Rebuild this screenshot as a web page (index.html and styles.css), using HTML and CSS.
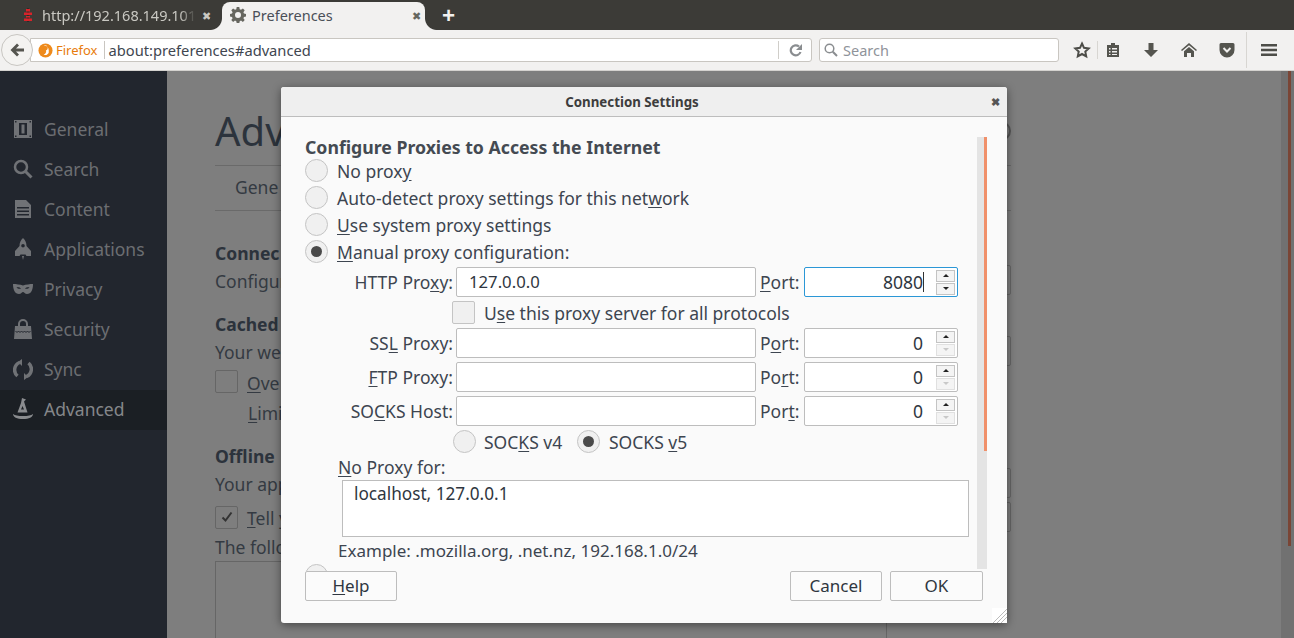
FILE: index.html
```html
<!DOCTYPE html>
<html>
  <head>
    <title>Preferences</title>
    <link rel="stylesheet" href="styles.css">
  </head>
  <body>
    <div class="tabbar">
      <div class="tab">
        <svg viewBox="0 0 10 14" width="10" height="14"><path fill="#2b2a28" d="M4 0h2v14H4z"/><path fill="#d8232a" d="M3 1h4v2.500H3zM1 4.500h8V7H1zM3 8h4v1.500H3zM1 10.500h8V13H1z"/></svg>
        <span class="tab-title">http://192.168.149.101</span>
        <span class="tab-x">&#10006;</span>
      </div>
      <div class="tab tab-on">
        <svg viewBox="0 0 16 16" width="16" height="16"><path fill="#66665f" fill-rule="evenodd" d="M6.700 0h2.600l.4 2.200 1.300.6 1.900-1.300 1.800 1.800-1.300 1.900.6 1.300 2 .4v2.600l-2 .4-.6 1.300 1.300 1.900-1.800 1.800-1.900-1.300-1.300.6-.4 2H6.700l-.4-2-1.300-.6-1.900 1.300-1.800-1.800 1.300-1.900-.6-1.300-2-.4V6.900l2-.4.6-1.300-1.300-1.900 1.800-1.800L5 2.800l1.300-.6zM8 5a3 3 0 1 0 0 6 3 3 0 0 0 0-6z"/></svg>
        <span class="tab-title">Preferences</span>
        <span class="tab-x">&#10006;</span>
      </div>
      <span class="tab-new">+</span>
    </div>

    <div class="toolbar">
      <button class="back">
        <svg viewBox="0 0 16 16" width="16" height="16"><path fill="#55554f" d="M8 1.500l2 2L7 6.500h8v3H7l3 3-2 2L1.500 8z"/></svg>
      </button>
      <div class="urlbar">
        <svg viewBox="0 0 16 16" width="15" height="15"><circle cx="8" cy="8" r="7.500" fill="#ee8a1b"/><path fill="#fff" d="M6 2.500a6 6 0 0 1 5.500 5.500A4 4 0 0 1 6 12.500 3.500 3.500 0 0 0 8.500 8 3 3 0 0 0 6 2.500z"/></svg>
        <span class="brand">Firefox</span>
        <span class="url">about:preferences#advanced</span>
        <i class="url-sep"></i>
        <svg class="reload" viewBox="0 0 14 14" width="14" height="14"><path fill="none" stroke="#8a8d90" stroke-width="2.200" d="M11.500 9a5 5 0 1 1-1.500-5.500"/><path fill="#8a8d90" d="M13 1v6H7z"/></svg>
      </div>
      <div class="searchbar">
        <svg viewBox="0 0 14 14" width="14" height="14"><circle cx="5.500" cy="5.500" r="4.300" fill="none" stroke="#8a8d90" stroke-width="1.500"/><path stroke="#8a8d90" stroke-width="2" d="M8.800 8.800l4.200 4.200"/></svg>
        <span>Search</span>
      </div>
      <div class="tools">
        <svg viewBox="0 0 18 18" width="18" height="18"><path fill="none" stroke="#4d4d48" stroke-width="2" d="M9 2.500l2 4.300 4.700.6-3.400 3.200.9 4.700L9 13l-4.200 2.300.9-4.700L2.300 7.400 7 6.800z"/></svg>
        <i class="sep"></i>
        <svg viewBox="0 0 16 16" width="16" height="16"><path fill="#55554f" fill-rule="evenodd" d="M6 1h4v2h4v12H2V3h4zM4 6v1.500h1.500V6zm3 0v1.500h5V6zM4 9v1.500h1.500V9zm3 0v1.500h5V9zm-3 3v1h1.500v-1zm3 0v1h5v-1z"/></svg>
        <svg class="t-gap" viewBox="0 0 16 16" width="16" height="16"><path fill="#55554f" d="M5.500 1h5v7H15l-7 7-7-7h4.500z"/></svg>
        <svg class="t-gap" viewBox="0 0 16 16" width="16" height="16"><path fill="#55554f" d="M8 1l8 7-1 1-7-5.800L1 9 0 8z"/><path fill="#55554f" d="M8 5l5 4.200V15h-3v-4H6v4H3V9.200z"/></svg>
        <svg class="t-gap" viewBox="0 0 16 16" width="16" height="16"><path fill="#55554f" fill-rule="evenodd" d="M2 1h12a1.500 1.500 0 0 1 1.500 1.500V8a7.500 7.500 0 0 1-15 0V2.500A1.500 1.500 0 0 1 2 1z"/><path fill="none" stroke="#f1f0ee" stroke-width="2" d="M4.500 6L8 9.500 11.500 6"/></svg>
        <i class="sep sep-tall"></i>
        <svg viewBox="0 0 16 14" width="16" height="14"><path fill="#4d4d48" d="M0 1h16v2.500H0zM0 5.700h16v2.500H0zM0 10.500h16V13H0z"/></svg>
      </div>
    </div>

    <div class="page">
      <nav class="side">
        <a><span class="ico"><svg viewBox="0 0 18 18" width="18" height="18"><path fill="#707276" fill-rule="evenodd" d="M0 0h18v18H0zM5 3v12h8V3zm2.500 1.500h3v9h-3z"/><path fill="#22262e" d="M1 1h1.500v1.500H1zM15.500 1H17v1.500h-1.500zM1 15.500h1.500V17H1zM15.500 15.500H17V17h-1.500z"/></svg></span>General</a>
        <a><span class="ico"><svg viewBox="0 0 20 20" width="20" height="20"><circle cx="8" cy="8" r="6" fill="none" stroke="#707276" stroke-width="2.500"/><path stroke="#707276" stroke-width="3" d="M12.500 12.500l6 6"/></svg></span>Search</a>
        <a><span class="ico"><svg viewBox="0 0 18 20" width="18" height="20"><path fill="#707276" fill-rule="evenodd" d="M1 1h11l5 5v13H1zM3 8v1.500h12V8zm0 3.500V13h12v-1.500zM3 15v1.500h12V15z"/></svg></span>Content</a>
        <a><span class="ico"><svg viewBox="0 0 18 22" width="18" height="22"><path fill="#707276" fill-rule="evenodd" d="M9 0c2.500 2 3.500 5 3.500 8l4.500 5v5h-4.500l-1-1.500h-5l-1 1.500H1v-5l4.500-5c0-3 1-6 3.500-8zM9 6a1.800 1.800 0 1 0 0 3.600A1.800 1.800 0 0 0 9 6z"/><path fill="#707276" d="M8 18h2l-1 4z"/></svg></span>Applications</a>
        <a><span class="ico"><svg viewBox="0 0 20 14" width="20" height="14"><path fill="#707276" fill-rule="evenodd" d="M0 2c3 0 7 .5 10 1.500C13 2.500 17 2 20 2c0 6-2 10-6 10-2 0-3-2-4-2s-2 2-4 2C2 12 0 8 0 2zm3.500 3.500c1 1.200 3 1.500 4.500 1-1-1-3-1.500-4.500-1zm13 0c-1.500-.5-3.500 0-4.500 1 1.500.5 3.500.2 4.500-1z"/></svg></span>Privacy</a>
        <a><span class="ico"><svg viewBox="0 0 18 20" width="18" height="20"><path fill="#707276" fill-rule="evenodd" d="M9 0a5 5 0 0 1 5 5v2h3l1 13H0L1 7h3V5a5 5 0 0 1 5-5zm0 2a3 3 0 0 0-3 3v2h6V5a3 3 0 0 0-3-3z"/><path fill="none" stroke="#22262e" d="M1.500 12l1.500 1.500L4.500 12 6 13.500 7.500 12 9 13.500 10.500 12l1.500 1.500 1.500-1.500 1.500 1.500 1.500-1.500"/></svg></span>Security</a>
        <a><span class="ico"><svg viewBox="0 0 20 21" width="20" height="21"><path fill="none" stroke="#707276" stroke-width="3.500" d="M4.500 17a8 8 0 0 1 2-13.500M15.500 4a8 8 0 0 1-2 13.500"/><path fill="#707276" d="M9 0v7L5 3zM11 21v-7l4 4z"/></svg></span>Sync</a>
        <a class="on"><span class="ico"><svg viewBox="0 0 20 22" width="20" height="22"><path fill="#8a8c8f" fill-rule="evenodd" d="M9 0l4 1.500-2 2 3.500 11h-10L8 5zM9.500 8L8 11.500h3z"/><path fill="#8a8c8f" d="M0 16c2 1.500 5 2 10 2s8-.5 10-2c0 3-4 5-10 5S0 19 0 16z"/></svg></span>Advanced</a>
      </nav>
      <div class="main">
        <div class="m-head"><h1 class="cut">Adv</h1><i class="help"></i></div>
        <div class="tabs-row">Gene</div>
        <h2 class="h-conn">Connec</h2>
        <div class="m-row"><span class="cut">Configur</span><i class="peek"></i></div>
        <h2 class="h-cache">Cached</h2>
        <div class="m-row"><span class="cut">Your we</span><i class="peek"></i></div>
        <div class="check-row"><i class="box"></i><span class="cut"><u>O</u>ve</span></div>
        <p class="indent cut"><u>L</u>imi</p>
        <h2 class="h-off">Offline</h2>
        <div class="m-row"><span class="cut">Your app</span><i class="peek"></i></div>
        <div class="m-row m-row-b">
          <span class="check-row check-in"><i class="box"><svg viewBox="0 0 12 12" width="12" height="12"><path fill="none" stroke="#333" stroke-width="2" d="M1.500 6.500l3 3 6-8"/></svg></i><span class="cut"><u>T</u>ell y</span></span>
          <i class="peek"></i>
        </div>
        <p class="cut p-foll">The follo</p>
        <div class="list"></div>
      </div>
      <div class="page-scroll"><i></i></div>
    </div>

    <div class="dialog">
      <div class="dlg-title">Connection Settings<span class="dlg-x">&#10006;</span></div>
      <div class="dlg-body">
        <div class="dlg-scroll">
          <h3>Configure Proxies to Access the Internet</h3>
          <label class="radio"><i class="dot"></i><span>No prox<u>y</u></span></label>
          <label class="radio"><i class="dot"></i><span>Auto-detect proxy settings for this net<u>w</u>ork</span></label>
          <label class="radio"><i class="dot"></i><span><u>U</u>se system proxy settings</span></label>
          <label class="radio"><i class="dot dot-on"></i><span><u>M</u>anual proxy configuration:</span></label>

          <div class="proxy-row r-http">
            <span class="lbl">HTTP Pro<u>x</u>y:</span>
            <span class="field"><span>127.0.0.0</span></span>
            <span class="plbl"><u>P</u>ort:</span>
            <span class="spin spin-focus"><span>8080</span><b class="caret"></b><span class="btns"><i class="up"></i><i class="down"></i></span></span>
          </div>
          <div class="all-row"><i class="box"></i><span>U<u>s</u>e this proxy server for all protocols</span></div>
          <div class="proxy-row">
            <span class="lbl">SS<u>L</u> Proxy:</span>
            <span class="field"></span>
            <span class="plbl">P<u>o</u>rt:</span>
            <span class="spin"><span>0</span><span class="btns"><i class="up"></i><i class="down off"></i></span></span>
          </div>
          <div class="proxy-row">
            <span class="lbl"><u>F</u>TP Proxy:</span>
            <span class="field"></span>
            <span class="plbl">Po<u>r</u>t:</span>
            <span class="spin"><span>0</span><span class="btns"><i class="up"></i><i class="down off"></i></span></span>
          </div>
          <div class="proxy-row">
            <span class="lbl">SO<u>C</u>KS Host:</span>
            <span class="field"></span>
            <span class="plbl">Por<u>t</u>:</span>
            <span class="spin"><span>0</span><span class="btns"><i class="up"></i><i class="down off"></i></span></span>
          </div>
          <div class="socks-row">
            <i class="dot"></i><span class="s4">SOC<u>K</u>S v4</span>
            <i class="dot dot-on"></i><span class="s5">SOCKS <u>v</u>5</span>
          </div>
          <div class="noproxy-lbl"><u>N</u>o Proxy for:</div>
          <div class="area">localhost, 127.0.0.1</div>
          <div class="example">Example: .mozilla.org, .net.nz, 192.168.1.0/24</div>
          <i class="dot dot-cut"></i>
        </div>
        <div class="scrollbar"><i></i></div>
      </div>
      <div class="dlg-foot">
        <button class="btn"><u>H</u>elp</button>
        <span class="grow"></span>
        <button class="btn">Cancel</button>
        <button class="btn btn-ok">OK</button>
      </div>
      <svg class="grip" viewBox="0 0 15 15" width="15" height="15"><path fill="#fff" d="M0 0h15v15H0z"/><path stroke="#bbb" d="M15 1L1 15M15 5L5 15M15 9L9 15"/></svg>
    </div>
  </body>
</html>
```

FILE: styles.css
```css
* {
  margin: 0;
  padding: 0;
  box-sizing: border-box;
}

html, body {
  height: 100%;
  overflow: hidden;
}

body {
  font-family: "Noto Sans", "Open Sans", sans-serif;
  font-size: 17.5px;
  color: #3d4550;
  background: #7e7e7e;
  display: flex;
  flex-direction: column;
}

u {
  text-underline-offset: 2px;
}

/* browser chrome */
.tabbar {
  height: 30px;
  background: #3c3b37;
  display: flex;
  align-items: flex-end;
  padding-left: 12px;
  flex: none;
}

.tab {
  width: 210px;
  height: 28px;
  display: flex;
  align-items: center;
  padding: 0 11px 2px 11px;
  color: #c9c8c2;
  font-size: 14.5px;
}

.tab svg {
  flex: none;
  margin-right: 9px;
}

.tab-title {
  flex: 1;
  overflow: hidden;
  white-space: nowrap;
  -webkit-mask-image: linear-gradient(to left, transparent, #000 16px);
  mask-image: linear-gradient(to left, transparent, #000 16px);
}

.tab-x {
  font-size: 11px;
  margin-left: 6px;
  color: #c9c8c2;
}

.tab-on {
  width: 203px;
  background: #f2f1f0;
  color: #4a4f58;
  border-radius: 8px 8px 0 0;
  padding: 0 4px 2px 8px;
  position: relative;
}

.tab-on svg {
  margin-right: 6px;
}

.tab-on::before,
.tab-on::after {
  content: "";
  position: absolute;
  bottom: 0;
  width: 12px;
  height: 12px;
}

.tab-on::before {
  left: -12px;
  background: radial-gradient(circle at 0 0, #3c3b37 11.500px, #f2f1f0 12.500px);
}

.tab-on::after {
  right: -12px;
  background: radial-gradient(circle at 100% 0, #3c3b37 11.500px, #f2f1f0 12.500px);
}

.tab-on .tab-title {
  -webkit-mask-image: none;
  mask-image: none;
}

.tab-on .tab-x {
  color: #66665f;
}

.tab-new {
  color: #f2f1f0;
  font-size: 23px;
  font-weight: 700;
  line-height: 30px;
  margin-left: 17px;
  align-self: center;
}

.toolbar {
  height: 41px;
  flex: none;
  background: #f2f1f0;
  border-bottom: 1px solid #d4d2cf;
  display: flex;
  align-items: center;
  padding-left: 1px;
}

.back {
  width: 32px;
  height: 32px;
  border: 1px solid #c8c6c2;
  border-radius: 50%;
  background: #f4f3f1;
  display: flex;
  align-items: center;
  justify-content: center;
  flex: none;
  position: relative;
  z-index: 1;
}

.urlbar {
  width: 782px;
  height: 24px;
  margin-left: -3px;
  background: #fff;
  border: 1px solid #c9c6c1;
  border-radius: 0 3px 3px 0;
  display: flex;
  align-items: center;
  padding-left: 7px;
}

.brand {
  color: #e87c0c;
  font-size: 13px;
  margin-left: 3px;
  padding-right: 6px;
  border-right: 1px solid #c9c6c1;
}

.url {
  margin-left: 4px;
  font-size: 14.700px;
  color: #404650;
  flex: 1;
}

.url-sep {
  width: 1px;
  height: 18px;
  background: #d0cec9;
  margin-right: 10px;
}

.reload {
  margin-right: 8px;
}

.searchbar {
  width: 240px;
  height: 24px;
  margin-left: 7px;
  background: #fff;
  border: 1px solid #c9c6c1;
  border-radius: 3px;
  display: flex;
  align-items: center;
  gap: 5px;
  padding-left: 4px;
  font-size: 14.500px;
  color: #8f939a;
}

.tools {
  display: flex;
  align-items: center;
  margin-left: 14px;
}

.sep {
  width: 1px;
  height: 18px;
  background: #d8d6d2;
  margin: 0 7px 0 6px;
}

.sep-tall {
  height: 36px;
  margin: 0 14px 0 11px;
}

.t-gap {
  margin-left: 22px;
}

/* dimmed preferences page */
.page {
  flex: 1;
  display: flex;
  min-height: 0;
}

.side {
  width: 167px;
  flex: none;
  background: #22262e;
  padding-top: 39px;
}

.side a {
  height: 40px;
  display: flex;
  align-items: center;
  color: #6c6e72;
  font-size: 17.500px;
  padding: 0 0 2px 13px;
}

.ico {
  width: 20px;
  margin-right: 11px;
  display: flex;
  justify-content: center;
}

.side a.on {
  background: #1b1f24;
  color: #85878a;
}

.main {
  flex: 1;
  padding: 34px 0 0 48px;
  color: #343a42;
  overflow: hidden;
}

.cut {
  white-space: nowrap;
}

.m-head {
  width: 796px;
  height: 61px;
  border-bottom: 1px solid #6a6a6a;
  display: flex;
  justify-content: space-between;
  align-items: center;
  padding-bottom: 8px;
}

.m-head h1 {
  font-weight: 400;
  font-size: 40px;
  line-height: 50px;
  color: #2c333c;
}

.help {
  width: 20px;
  height: 20px;
  border: 2px solid #555;
  border-radius: 50%;
}

.tabs-row {
  width: 796px;
  height: 45px;
  border-bottom: 1px solid #6a6a6a;
  padding: 9px 0 0 20px;
}

.main h2 {
  font-size: 17.500px;
  font-weight: 700;
  line-height: 22px;
  color: #2c333c;
}

.m-row {
  width: 796px;
  height: 30px;
  display: flex;
  justify-content: space-between;
  align-items: center;
  margin-top: 1px;
}

.m-row-b {
  margin-top: 4px;
}

.m-row > .cut {
  padding-top: 2px;
}

.peek {
  width: 30px;
  height: 30px;
  border: 1px solid #666;
  border-radius: 2px;
}

.h-conn {
  margin-top: 31px;
}

.h-cache {
  margin-top: 18px;
}

.h-off {
  margin-top: 20px;
}

.check-row {
  display: flex;
  align-items: center;
  gap: 9px;
  height: 23px;
  margin-top: 4px;
}

.check-row .cut {
  padding-top: 2px;
}

.check-in {
  margin-top: 0;
}

.check-row .box {
  background: transparent;
  border-color: #666;
}

.main .indent {
  margin: 6px 0 0 33px;
  line-height: 28px;
  height: 26px;
}

.main .p-foll {
  margin-top: 4px;
  line-height: 22px;
}

.list {
  width: 672px;
  height: 100px;
  border: 1px solid #666;
  margin-top: 3px;
}

.page-scroll {
  width: 13px;
  flex: none;
  background: #717171;
  padding-left: 7px;
}

.page-scroll i {
  display: block;
  width: 3px;
  height: 475px;
  background: #7a4535;
}

/* dialog */
.dialog {
  position: absolute;
  left: 281px;
  top: 87px;
  width: 726px;
  height: 536px;
  background: #fafafa;
  border-radius: 3px;
  box-shadow: 0 2px 10px rgba(0, 0, 0, .45);
  display: flex;
  flex-direction: column;
}

.dlg-title {
  height: 30px;
  flex: none;
  background: #efefef;
  border-bottom: 1px solid #bdbdbd;
  border-radius: 3px 3px 0 0;
  font-size: 13.300px;
  font-weight: 700;
  color: #3d3d3d;
  text-align: center;
  line-height: 30px;
  padding-right: 24px;
  position: relative;
}

.dlg-x {
  position: absolute;
  right: 7px;
  top: 0;
  font-size: 11px;
  color: #555;
}

.dlg-body {
  flex: none;
  height: 454px;
  display: flex;
  overflow: hidden;
}

.dlg-scroll {
  width: 696px;
  padding: 20px 0 0 24px;
  flex: none;
  position: relative;
}

.dlg-scroll h3 {
  font-size: 17.700px;
  font-weight: 700;
  line-height: 20px;
  color: #444a52;
}

.radio {
  display: flex;
  align-items: center;
  height: 27px;
  gap: 9px;
}

.dot {
  width: 23px;
  height: 23px;
  border-radius: 50%;
  border: 1px solid #c4c4c4;
  background: #f0f0f0;
  display: flex;
  align-items: center;
  justify-content: center;
  flex: none;
}

.dot-on::after {
  content: "";
  width: 11px;
  height: 11px;
  border-radius: 50%;
  background: #4a4a4a;
}

.dot-cut {
  position: absolute;
  left: 24px;
  top: 447px;
}

.box {
  width: 23px;
  height: 23px;
  border: 1px solid #c4c4c4;
  border-radius: 2px;
  background: #f0f0f0;
  display: flex;
  align-items: center;
  justify-content: center;
  flex: none;
}

.proxy-row {
  display: flex;
  align-items: center;
  height: 30px;
  margin-bottom: 4px;
}

.r-http {
  margin-top: 2px;
}

.lbl {
  width: 148px;
  text-align: right;
  white-space: nowrap;
}

.field {
  width: 300px;
  height: 30px;
  margin-left: 3px;
  background: #fff;
  border: 1px solid #bdbdbd;
  border-radius: 2px;
  padding-left: 12px;
  line-height: 28px;
  font-size: 16.700px;
  color: #2f3640;
}

.plbl {
  width: 48px;
  padding-left: 4px;
  white-space: nowrap;
}

.spin {
  width: 154px;
  height: 30px;
  background: #fff;
  border: 1px solid #bdbdbd;
  border-radius: 2px;
  display: flex;
  align-items: center;
  justify-content: flex-end;
  padding-right: 2px;
  color: #2f3640;
}

.spin-focus {
  border-color: #2b97d6;
}

.caret {
  width: 1px;
  height: 20px;
  background: #333;
  margin-right: -1px;
}

.btns {
  width: 19px;
  margin-left: 13px;
  display: flex;
  flex-direction: column;
  gap: 1px;
}

.btns i {
  height: 12px;
  border: 1px solid #c4c4c4;
  background: #f4f4f4;
  display: flex;
  align-items: center;
  justify-content: center;
}

.btns i::after {
  content: "";
  border-left: 3px solid transparent;
  border-right: 3px solid transparent;
}

.btns .up::after {
  border-bottom: 3px solid #222;
}

.btns .down::after {
  border-top: 3px solid #222;
}

.btns .down.off {
  border-color: #e0e0e0;
}

.btns .down.off::after {
  border-top-color: #c8c8c8;
}

.all-row {
  display: flex;
  align-items: center;
  gap: 9px;
  height: 23px;
  padding-left: 147px;
  margin-bottom: 4px;
}

.socks-row {
  display: flex;
  align-items: center;
  height: 23px;
  padding-left: 148px;
}

.socks-row span {
  margin-left: 8px;
}

.socks-row .s4 {
  width: 93px;
}

.socks-row .s5 {
  margin-left: 9px;
}

.noproxy-lbl {
  margin: 2px 0 0 33px;
  line-height: 24px;
}

.area {
  width: 627px;
  height: 57px;
  margin: 1px 0 0 37px;
  background: #fff;
  border: 1px solid #bdbdbd;
  padding: 1px 11px;
  font-size: 17.200px;
  color: #2f3640;
  line-height: 24px;
}

.example {
  margin: 2px 0 0 33px;
  font-size: 17px;
  line-height: 24px;
}

.scrollbar {
  width: 10px;
  height: 432px;
  margin-top: 20px;
  background: #e4e4e4;
  display: flex;
  justify-content: flex-end;
}

.scrollbar i {
  width: 3px;
  height: 314px;
  background: #f0906a;
}

.dlg-foot {
  height: 30px;
  display: flex;
  gap: 8px;
  padding: 0 24px;
}

.grow {
  flex: 1;
}

.btn {
  width: 92px;
  height: 30px;
  font: inherit;
  font-size: 17px;
  line-height: 26px;
  color: #2f3640;
  background: #fbfbfb;
  border: 1px solid #bdbdbd;
  border-radius: 2px;
}

.btn-ok {
  width: 93px;
}

.grip {
  position: absolute;
  right: 0;
  bottom: 0;
}
```
